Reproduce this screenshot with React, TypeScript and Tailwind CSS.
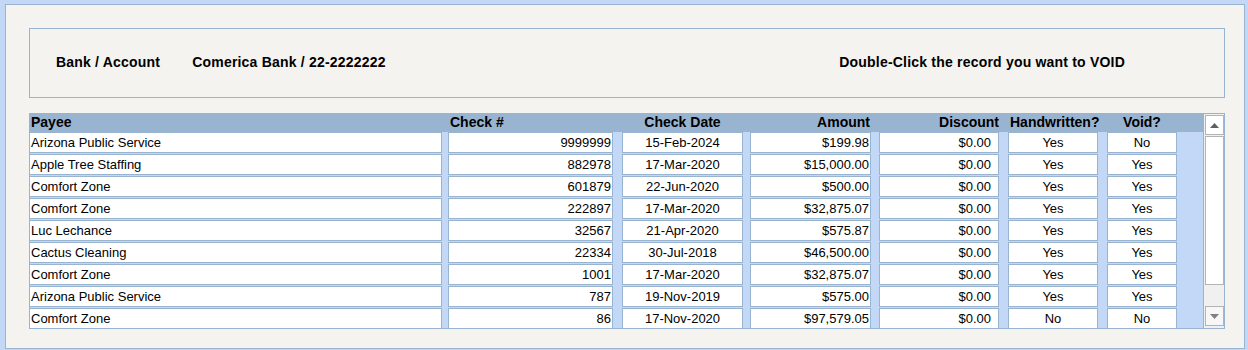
import React from "react";

interface CheckRow {
  payee: string;
  checkNo: string;
  date: string;
  amount: string;
  discount: string;
  handwritten: string;
  isVoid: string;
}

const rows: CheckRow[] = [
  { payee: "Arizona Public Service", checkNo: "9999999", date: "15-Feb-2024", amount: "$199.98", discount: "$0.00", handwritten: "Yes", isVoid: "No" },
  { payee: "Apple Tree Staffing", checkNo: "882978", date: "17-Mar-2020", amount: "$15,000.00", discount: "$0.00", handwritten: "Yes", isVoid: "Yes" },
  { payee: "Comfort Zone", checkNo: "601879", date: "22-Jun-2020", amount: "$500.00", discount: "$0.00", handwritten: "Yes", isVoid: "Yes" },
  { payee: "Comfort Zone", checkNo: "222897", date: "17-Mar-2020", amount: "$32,875.07", discount: "$0.00", handwritten: "Yes", isVoid: "Yes" },
  { payee: "Luc Lechance", checkNo: "32567", date: "21-Apr-2020", amount: "$575.87", discount: "$0.00", handwritten: "Yes", isVoid: "Yes" },
  { payee: "Cactus Cleaning", checkNo: "22334", date: "30-Jul-2018", amount: "$46,500.00", discount: "$0.00", handwritten: "Yes", isVoid: "Yes" },
  { payee: "Comfort Zone", checkNo: "1001", date: "17-Mar-2020", amount: "$32,875.07", discount: "$0.00", handwritten: "Yes", isVoid: "Yes" },
  { payee: "Arizona Public Service", checkNo: "787", date: "19-Nov-2019", amount: "$575.00", discount: "$0.00", handwritten: "Yes", isVoid: "Yes" },
  { payee: "Comfort Zone", checkNo: "86", date: "17-Nov-2020", amount: "$97,579.05", discount: "$0.00", handwritten: "No", isVoid: "No" },
];

const cell = "h-[21px] shrink-0 border border-[#99b4d1] bg-white leading-[19px] whitespace-nowrap overflow-hidden";

const App: React.FC = () => {
  return (
    <div
      className="w-[1248px] h-[350px] bg-[#c2d8f6] pt-[4px] pl-[5px] pr-[3px] pb-[1px] text-black"
      style={{ fontFamily: '"Liberation Sans", Arial, sans-serif' }}
    >
      <div className="h-[345px] border border-[#99b4d1] bg-[#f4f3ef] pt-[23px] pl-[23px]">
        {/* header box */}
        <div className="w-[1196px] h-[70px] border border-[#99b4d1] flex items-center text-[14px] font-bold tracking-[0.2px] pb-[2px]">
          <span className="ml-[26px]">Bank / Account</span>
          <span className="ml-[32px]">Comerica Bank / 22-2222222</span>
          <span className="ml-auto mr-[99px]">Double-Click the record you want to VOID</span>
        </div>

        {/* check list */}
        <div className="mt-[15px] w-[1196px] h-[216px] border border-[#99b4d1] flex overflow-hidden">
          <div className="w-[1173px] shrink-0 flex flex-col">
            <div className="h-[18px] shrink-0 bg-[#99b4d1] flex text-[14px] font-bold leading-[16px]">
              <div className="w-[412px] shrink-0 pl-[1px]">Payee</div>
              <div className="w-[6px] shrink-0" />
              <div className="w-[165px] shrink-0 pl-[2px]">Check #</div>
              <div className="w-[9px] shrink-0" />
              <div className="w-[121px] shrink-0 text-center">Check Date</div>
              <div className="w-[7px] shrink-0" />
              <div className="w-[121px] shrink-0 text-right pr-[1px]">Amount</div>
              <div className="w-[8px] shrink-0" />
              <div className="w-[120px] shrink-0 text-right">Discount</div>
              <div className="w-[9px] shrink-0" />
              <div className="w-[90px] shrink-0 text-center pl-[2px]">Handwritten?</div>
              <div className="w-[9px] shrink-0" />
              <div className="w-[70px] shrink-0 text-center">Void?</div>
            </div>
            <div className="flex-1 bg-[#c2d8f6] flex flex-col text-[13px]">
              {rows.map((r, i) => (
                <div key={i} className="h-[22px] shrink-0 flex">
                  <div className={`${cell} w-[412px] border-l-0 pl-[1px]`}>{r.payee}</div>
                  <div className="w-[6px] shrink-0" />
                  <div className={`${cell} w-[165px] text-right pr-[1px]`}>{r.checkNo}</div>
                  <div className="w-[9px] shrink-0" />
                  <div className={`${cell} w-[121px] text-center`}>{r.date}</div>
                  <div className="w-[7px] shrink-0" />
                  <div className={`${cell} w-[121px] text-right pr-[1px]`}>{r.amount}</div>
                  <div className="w-[8px] shrink-0" />
                  <div className={`${cell} w-[120px] text-right pr-[7px]`}>{r.discount}</div>
                  <div className="w-[9px] shrink-0" />
                  <div className={`${cell} w-[90px] text-center`}>{r.handwritten}</div>
                  <div className="w-[9px] shrink-0" />
                  <div className={`${cell} w-[70px] text-center`}>{r.isVoid}</div>
                </div>
              ))}
            </div>
          </div>

          {/* scrollbar */}
          <div className="w-[21px] shrink-0 -mt-px border-l border-t border-[#99b4d1] bg-[#f0f0f0] flex flex-col items-center pt-px">
            <div className="w-[19px] h-[20px] border border-[#b4b4b4] bg-white flex items-center justify-center">
              <svg width="9" height="5" viewBox="0 0 9 5">
                <path d="M4.5 0 L9 5 L0 5 Z" fill="#606060" />
              </svg>
            </div>
            <div className="w-[19px] h-[149px] mt-px border border-[#b4b4b4] bg-white" />
            <div className="flex-1" />
            <div className="w-[19px] h-[20px] mb-[2px] border border-[#b4b4b4] bg-[#f7f7f7] flex items-center justify-center">
              <svg width="9" height="5" viewBox="0 0 9 5">
                <path d="M0 0 L9 0 L4.5 5 Z" fill="#808080" />
              </svg>
            </div>
          </div>
        </div>
      </div>
    </div>
  );
};

export default App;
